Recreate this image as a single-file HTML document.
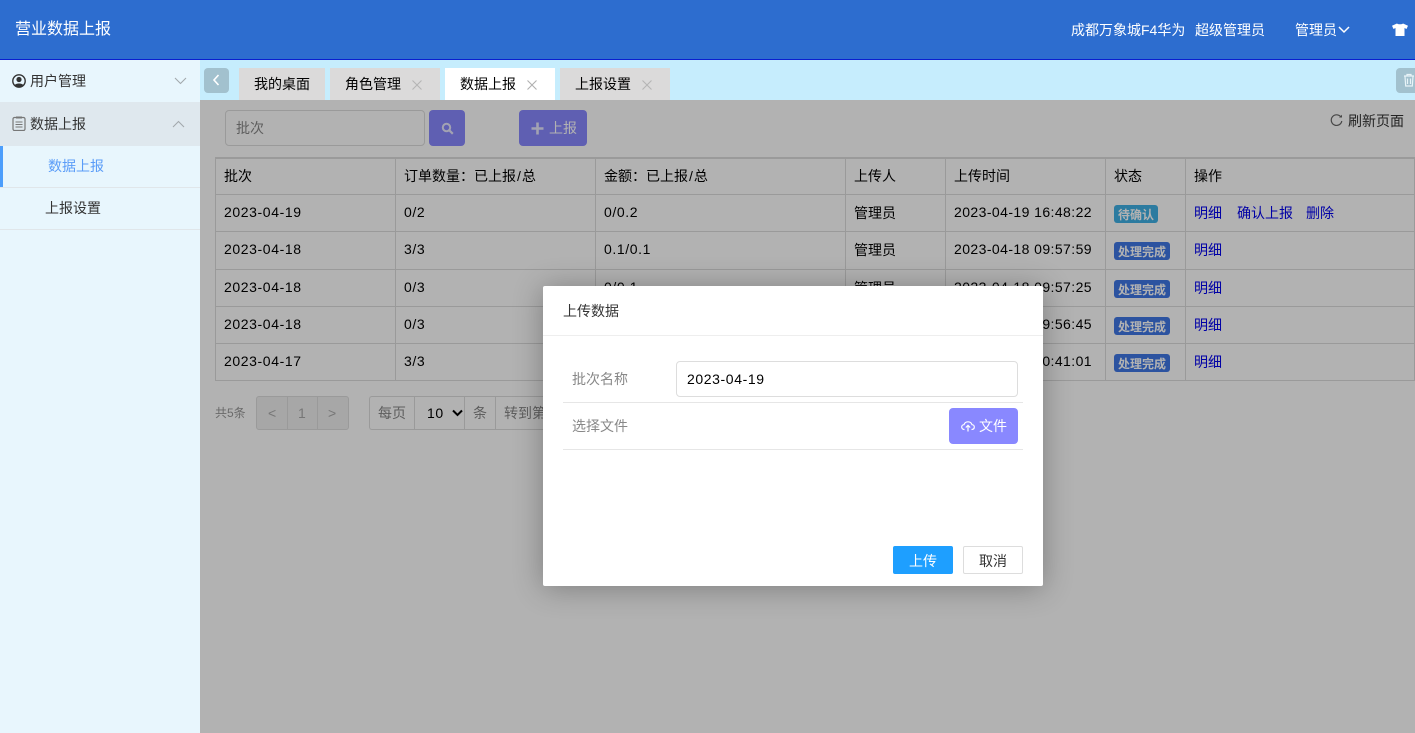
<!DOCTYPE html>
<html lang="zh"><head><meta charset="utf-8"><title>营业数据上报</title>
<style>
*{box-sizing:border-box}
html,body{margin:0;padding:0;width:1415px;height:733px;overflow:hidden;background:#fff}
body{font:14px/20px "Liberation Sans","Noto Sans CJK SC",sans-serif;color:#333;position:relative}
.a{position:absolute;white-space:nowrap}
.n{letter-spacing:.6px;margin-top:-1px}
.d{letter-spacing:.42px}
.s{margin:0 1px}
#top{left:0;top:0;width:1415px;height:60px;background:#2d6dcf;border-bottom:1px solid #0a1fd0}
#side{left:0;top:60px;width:200px;height:673px;background:#e8f6fd}
#tabs{left:200px;top:60px;width:1215px;height:40px;background:#c6edfd}
.tab{position:absolute;top:8px;height:32px;background:#dbdada;color:#000;line-height:33px;padding-left:15px}
.tab.on{background:#fff}
.tab svg{position:absolute;top:12px}
#mask{left:200px;top:100px;width:1215px;height:633px;background:rgba(0,0,0,.3)}
.h{position:absolute;background:#ddd;height:1px}
.v{position:absolute;background:#ddd;width:1px}
.t{position:absolute;color:#000;white-space:nowrap}
.lnk{color:#0000ee}
.b{position:absolute;height:18px;border-radius:3px;color:#fff;font-size:12px;line-height:21px;font-weight:bold;text-align:center}
#dlg{left:543px;top:286px;width:500px;height:300px;background:#fff;border-radius:2px;box-shadow:0 2px 30px rgba(0,0,0,.3)}
</style></head><body>

<div class="a" id="top">
 <div class="a" style="left:15px;top:19px;color:#fff;font-size:16px;line-height:22px">营业数据上报</div>
 <div class="a" style="left:1071px;top:20px;color:#fff;font-size:14px">成都万象城F4华为</div>
 <div class="a" style="left:1195px;top:20px;color:#fff;font-size:14px">超级管理员</div>
 <div class="a" style="left:1295px;top:20px;color:#fff;font-size:14px">管理员</div>
 <svg class="a" style="left:1338px;top:26px" width="12" height="8" viewBox="0 0 12 8"><path d="M1 1l5 5 5-5" fill="none" stroke="#fff" stroke-width="1.5"/></svg>
 <svg class="a" style="left:1392px;top:23px" width="16" height="13" viewBox="0 0 16 13"><path d="M5 .5L0 2.800 1.500 6 3.500 5V13H12.500V5L14.500 6 16 2.800 11 .5C10 1.500 6 1.500 5 .5Z" fill="#fff"/></svg>
</div>

<div class="a" id="side">
 <svg class="a" style="left:12px;top:14px" width="14" height="14" viewBox="0 0 14 14"><circle cx="7" cy="7" r="6.200" fill="none" stroke="#333" stroke-width="1.400"/><circle cx="7" cy="5.500" r="2.600" fill="#333"/><path d="M2.500 11.500C3.500 8.800 10.500 8.800 11.500 11.500L7 13.500Z" fill="#333"/></svg>
 <div class="a" style="left:30px;top:11px">用户管理</div>
 <svg class="a" style="left:174px;top:17px" width="13" height="8" viewBox="0 0 13 8"><path d="M1 1l5.500 5.500L12 1" fill="none" stroke="#a3a9ad" stroke-width="1.100"/></svg>
 <div class="a" style="left:0;top:42px;width:200px;height:44px;background:#dfe8ee"></div>
 <svg class="a" style="left:12px;top:56px" width="14" height="15" viewBox="0 0 14 15"><rect x="1" y="1.500" width="12" height="13" rx="1.500" fill="none" stroke="#777" stroke-width="1.200"/><rect x="4" y=".5" width="6" height="2" fill="#777"/><path d="M3.500 6h7M3.500 8.500h7M3.500 11h7" stroke="#777"/></svg>
 <div class="a" style="left:30px;top:54px">数据上报</div>
 <svg class="a" style="left:172px;top:60px" width="13" height="8" viewBox="0 0 13 8"><path d="M1 7l5.500-5.500L12 7" fill="none" stroke="#a3a9ad" stroke-width="1.100"/></svg>
 <div class="a" style="left:0;top:86px;width:3px;height:41px;background:#4c9efc"></div>
 <div class="a" style="left:48px;top:96px;color:#5a9cf8">数据上报</div>
 <div class="a" style="left:0;top:127px;width:200px;height:1px;background:#e0e6ea"></div>
 <div class="a" style="left:45px;top:138px">上报设置</div>
 <div class="a" style="left:0;top:169px;width:200px;height:1px;background:#e0e6ea"></div>
</div>

<div class="a" id="tabs">
 <div class="a" style="left:4px;top:8px;width:25px;height:25px;background:#a2c1ce;border-radius:4px"><svg class="a" style="left:8px;top:6px" width="8" height="12" viewBox="0 0 8 12"><path d="M6.500 1L2 6l4.500 5" fill="none" stroke="#fff" stroke-width="1.600"/></svg></div>
 <div class="tab" style="left:39px;width:86px">我的桌面</div>
 <div class="tab" style="left:130px;width:110px">角色管理<svg style="left:82px" width="10" height="10" viewBox="0 0 10 10"><path d="M.5.500l9 9M9.500.500l-9 9" stroke="#b5b5b5" stroke-width="1.100"/></svg></div>
 <div class="tab on" style="left:245px;width:110px">数据上报<svg style="left:82px" width="10" height="10" viewBox="0 0 10 10"><path d="M.5.500l9 9M9.500.500l-9 9" stroke="#b0b0b0" stroke-width="1.100"/></svg></div>
 <div class="tab" style="left:360px;width:110px">上报设置<svg style="left:82px" width="10" height="10" viewBox="0 0 10 10"><path d="M.5.500l9 9M9.500.500l-9 9" stroke="#b5b5b5" stroke-width="1.100"/></svg></div>
 <div class="a" style="left:1196px;top:8px;width:19px;height:25px;background:#a2c1ce;border-radius:4px 0 0 4px"><svg class="a" style="left:7px;top:5px" width="12" height="14" viewBox="0 0 12 14"><path d="M1 3h10M4 3V1.500h4V3M2 3.500l.7 9.500h6.600l.7-9.500M4.500 5.500v5.500M7.500 5.500v5.500" fill="none" stroke="#e8f4f8" stroke-width="1.200"/></svg></div>
</div>

<div class="a" id="main" style="left:0;top:0;width:1415px;height:733px">
 <div class="a" style="left:200px;top:100px;width:1215px;height:633px;background:#fff"></div>
 <div class="a" style="left:225px;top:110px;width:200px;height:36px;border:1px solid #ddd;border-radius:4px;background:#fff;color:#888;line-height:35px;padding-left:10px">批次</div>
 <div class="a" style="left:429px;top:110px;width:36px;height:36px;border-radius:4px;background:#8988ff"><svg class="a" style="left:12px;top:12px" width="13" height="13" viewBox="0 0 13 13"><circle cx="5.500" cy="5.500" r="3.700" fill="none" stroke="#e8e8ff" stroke-width="2"/><path d="M8.300 8.300l3.500 3.500" stroke="#e8e8ff" stroke-width="2.200"/></svg></div>
 <div class="a" style="left:519px;top:110px;width:68px;height:36px;border-radius:4px;background:#8988ff;color:#fff;line-height:37px;padding-left:30px">上报<svg class="a" style="left:12px;top:12px" width="13" height="13" viewBox="0 0 13 13"><path d="M6.500.5v12M.5 6.500h12" stroke="#e8e8ff" stroke-width="2.600"/></svg></div>
 <svg class="a" style="left:1330px;top:114px" width="13" height="13" viewBox="0 0 13 13"><path d="M11 3.200A5.300 5.300 0 1 0 11.800 7" fill="none" stroke="#666" stroke-width="1.200"/><path d="M9 3.500h3V.8z" fill="#666"/></svg>
 <div class="a" style="left:1348px;top:111px">刷新页面</div>

 <div class="h" style="left:215px;top:157px;width:1200px;height:2px"></div>
 <div class="h" style="left:215px;top:194px;width:1200px"></div>
 <div class="h" style="left:215px;top:231px;width:1200px"></div>
 <div class="h" style="left:215px;top:269px;width:1200px"></div>
 <div class="h" style="left:215px;top:306px;width:1200px"></div>
 <div class="h" style="left:215px;top:343px;width:1200px"></div>
 <div class="h" style="left:215px;top:380px;width:1200px"></div>
 <div class="v" style="left:215px;top:157px;height:224px"></div>
 <div class="v" style="left:395px;top:157px;height:224px"></div>
 <div class="v" style="left:595px;top:157px;height:224px"></div>
 <div class="v" style="left:845px;top:157px;height:224px"></div>
 <div class="v" style="left:945px;top:157px;height:224px"></div>
 <div class="v" style="left:1105px;top:157px;height:224px"></div>
 <div class="v" style="left:1185px;top:157px;height:224px"></div>
 <div class="v" style="left:1414px;top:157px;height:224px"></div>

 <div class="t" style="left:224px;top:166px">批次</div><div class="t" style="left:404px;top:166px">订单数量：已上报<span class="s">/</span>总</div><div class="t" style="left:604px;top:166px">金额：已上报<span class="s">/</span>总</div><div class="t" style="left:854px;top:166px">上传人</div><div class="t" style="left:954px;top:166px">上传时间</div><div class="t" style="left:1114px;top:166px">状态</div><div class="t" style="left:1194px;top:166px">操作</div>

 <div class="t n" style="left:224px;top:203px">2023-04-19</div><div class="t n" style="left:404px;top:203px">0/2</div><div class="t n" style="left:604px;top:203px">0/0.2</div><div class="t" style="left:854px;top:203px">管理员</div><div class="t n d" style="left:954px;top:203px">2023-04-19 16:48:22</div>
 <div class="b" style="left:1114px;top:205px;width:44px;background:#3fb1e6">待确认</div>
 <div class="t lnk" style="left:1194px;top:203px">明细</div><div class="t lnk" style="left:1237px;top:203px">确认上报</div><div class="t lnk" style="left:1306px;top:203px">删除</div>

 <div class="t n" style="left:224px;top:240px">2023-04-18</div><div class="t n" style="left:404px;top:240px">3/3</div><div class="t n" style="left:604px;top:240px">0.1/0.1</div><div class="t" style="left:854px;top:240px">管理员</div><div class="t n d" style="left:954px;top:240px">2023-04-18 09:57:59</div>
 <div class="b" style="left:1114px;top:242px;width:56px;background:#3f77e5">处理完成</div>
 <div class="t lnk" style="left:1194px;top:240px">明细</div>

 <div class="t n" style="left:224px;top:278px">2023-04-18</div><div class="t n" style="left:404px;top:278px">0/3</div><div class="t n" style="left:604px;top:278px">0/0.1</div><div class="t" style="left:854px;top:278px">管理员</div><div class="t n d" style="left:954px;top:278px">2023-04-18 09:57:25</div>
 <div class="b" style="left:1114px;top:280px;width:56px;background:#3f77e5">处理完成</div>
 <div class="t lnk" style="left:1194px;top:278px">明细</div>

 <div class="t n" style="left:224px;top:315px">2023-04-18</div><div class="t n" style="left:404px;top:315px">0/3</div><div class="t n d" style="left:954px;top:315px">2023-04-18 09:56:45</div>
 <div class="b" style="left:1114px;top:317px;width:56px;background:#3f77e5">处理完成</div>
 <div class="t lnk" style="left:1194px;top:315px">明细</div>

 <div class="t n" style="left:224px;top:352px">2023-04-17</div><div class="t n" style="left:404px;top:352px">3/3</div><div class="t n d" style="left:954px;top:352px">2023-04-17 10:41:01</div>
 <div class="b" style="left:1114px;top:354px;width:56px;background:#3f77e5">处理完成</div>
 <div class="t lnk" style="left:1194px;top:352px">明细</div>

 <div class="a" style="left:215px;top:403px;font-size:12px;color:#999">共5条</div>
 <div class="a" style="left:256px;top:396px;width:93px;height:34px;border:1px solid #ddd;border-radius:3px;background:#f0f0f0"></div>
 <div class="v" style="left:287px;top:396px;height:34px"></div><div class="v" style="left:317px;top:396px;height:34px"></div>
 <div class="a" style="left:268px;top:403px;color:#aaa">&lt;</div><div class="a" style="left:298px;top:403px;color:#aaa">1</div><div class="a" style="left:328px;top:403px;color:#aaa">&gt;</div>
 <div class="a" style="left:369px;top:396px;width:180px;height:34px;border:1px solid #ddd;border-right:0;border-radius:3px 0 0 3px"></div>
 <div class="v" style="left:414px;top:396px;height:34px"></div><div class="v" style="left:464px;top:396px;height:34px"></div><div class="v" style="left:495px;top:396px;height:34px"></div>
 <div class="a" style="left:378px;top:403px;color:#888">每页</div>
 <div class="t n" style="left:427px;top:404px">10</div>
 <svg class="a" style="left:452px;top:409px" width="11" height="8" viewBox="0 0 11 8"><path d="M1 1.500l4.500 4.500L10 1.500" fill="none" stroke="#000" stroke-width="2"/></svg>
 <div class="a" style="left:473px;top:403px;color:#888">条</div>
 <div class="a" style="left:504px;top:403px;color:#888">转到第</div>
</div>

<div class="a" id="mask"></div>

<div class="a" id="dlg">
 <div class="a" style="left:20px;top:15px;color:#333">上传数据</div>
 <div class="h" style="left:0;top:49px;width:500px;background:#eee"></div>
 <div class="a" style="left:29px;top:83px;color:#888">批次名称</div>
 <div class="a" style="left:133px;top:75px;width:342px;height:36px;border:1px solid #ddd;border-radius:4px;color:#000;line-height:35px;padding-left:10px;letter-spacing:.6px">2023-04-19</div>
 <div class="h" style="left:20px;top:116px;width:460px;background:#e6e6e6"></div>
 <div class="a" style="left:29px;top:130px;color:#888">选择文件</div>
 <div class="a" style="left:406px;top:122px;width:69px;height:36px;border-radius:4px;background:#8988ff;color:#fff;line-height:37px;padding-left:30px">文件<svg class="a" style="left:12px;top:13px" width="14" height="11" viewBox="0 0 14 11"><path d="M3.500 8.500C1.500 8.500.7 7.300.7 6 .7 4.700 1.800 3.700 3 3.700 3.500 2 5 .8 7 .8c2 0 3.500 1.200 4 2.900 1.200 0 2.300 1 2.300 2.300 0 1.300-.8 2.500-2.800 2.500" fill="none" stroke="#fff" stroke-width="1.200"/><path d="M7 10.500V4.500M4.800 6.500L7 4.300 9.200 6.500" fill="none" stroke="#fff" stroke-width="1.200"/></svg></div>
 <div class="h" style="left:20px;top:163px;width:460px;background:#e6e6e6"></div>
 <div class="a" style="left:350px;top:260px;width:60px;height:28px;background:#1e9fff;border-radius:2px;color:#fff;text-align:center;line-height:30px">上传</div>
 <div class="a" style="left:420px;top:260px;width:60px;height:28px;background:#fff;border:1px solid #ddd;border-radius:2px;color:#333;text-align:center;line-height:28px">取消</div>
</div>
</body></html>
